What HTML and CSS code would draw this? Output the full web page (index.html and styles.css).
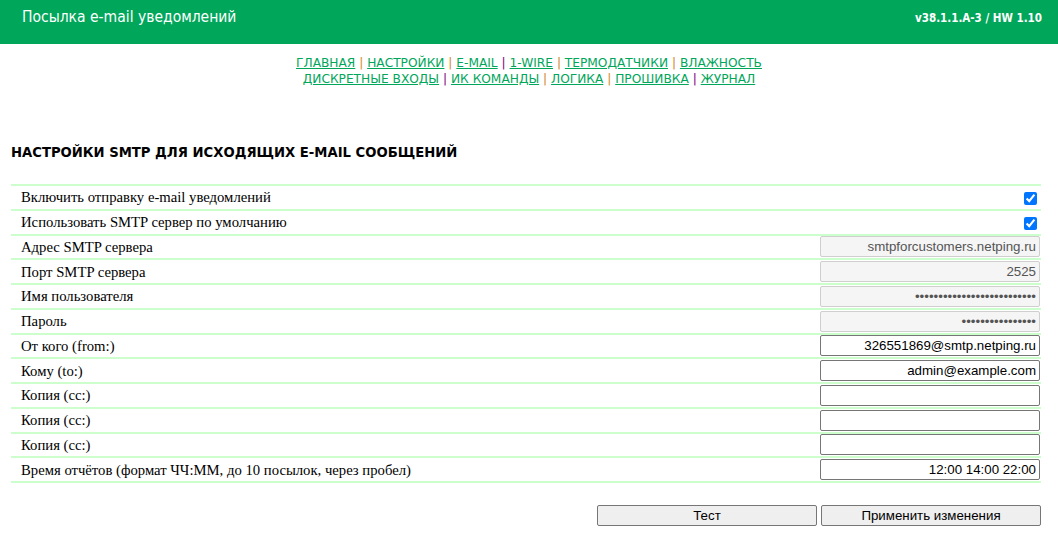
FILE: index.html
```html
<!DOCTYPE html>
<html lang="ru">
<head>
    <meta charset="UTF-8">
    <title>Посылка e-mail уведомлений</title>
    <link rel="stylesheet" href="styles.css">
</head>
<body>
    <div id="header">
        <div id="title">Посылка e-mail уведомлений</div>
        <div id="version">v38.1.1.A-3 / HW 1.10</div>
    </div>

    <div id="nav">
        <div>
            <a href="#">ГЛАВНАЯ</a> <span class="sep">|</span>
            <a href="#">НАСТРОЙКИ</a> <span class="sep">|</span>
            <a href="#">E-MAIL</a> <span class="sep alt">|</span>
            <a href="#">1-WIRE</a> <span class="sep">|</span>
            <a href="#">ТЕРМОДАТЧИКИ</a> <span class="sep">|</span>
            <a href="#">ВЛАЖНОСТЬ</a>
        </div>
        <div>
            <a href="#">ДИСКРЕТНЫЕ ВХОДЫ</a> <span class="sep alt">|</span>
            <a href="#">ИК КОМАНДЫ</a> <span class="sep">|</span>
            <a href="#">ЛОГИКА</a> <span class="sep">|</span>
            <a href="#">ПРОШИВКА</a> <span class="sep alt">|</span>
            <a href="#">ЖУРНАЛ</a>
        </div>
    </div>

    <h2>НАСТРОЙКИ SMTP ДЛЯ ИСХОДЯЩИХ E-MAIL СООБЩЕНИЙ</h2>

    <table id="settings">
        <tr>
            <td>Включить отправку e-mail уведомлений</td>
            <td class="val"><input type="checkbox" checked></td>
        </tr>
        <tr>
            <td>Использовать SMTP сервер по умолчанию</td>
            <td class="val"><input type="checkbox" checked></td>
        </tr>
        <tr>
            <td>Адрес SMTP сервера</td>
            <td class="val"><input type="text" value="smtpforcustomers.netping.ru" disabled></td>
        </tr>
        <tr>
            <td>Порт SMTP сервера</td>
            <td class="val"><input type="text" value="2525" disabled></td>
        </tr>
        <tr>
            <td>Имя пользователя</td>
            <td class="val"><input type="password" value="12345678901234567890123456" disabled></td>
        </tr>
        <tr>
            <td>Пароль</td>
            <td class="val"><input type="password" value="1234567890123456" disabled></td>
        </tr>
        <tr>
            <td>От кого (from:)</td>
            <td class="val"><input type="text" value="326551869@smtp.netping.ru"></td>
        </tr>
        <tr>
            <td>Кому (to:)</td>
            <td class="val"><input type="text" value="admin@example.com"></td>
        </tr>
        <tr>
            <td>Копия (cc:)</td>
            <td class="val"><input type="text" value=""></td>
        </tr>
        <tr>
            <td>Копия (cc:)</td>
            <td class="val"><input type="text" value=""></td>
        </tr>
        <tr>
            <td>Копия (cc:)</td>
            <td class="val"><input type="text" value=""></td>
        </tr>
        <tr>
            <td>Время отчётов (формат ЧЧ:ММ, до 10 посылок, через пробел)</td>
            <td class="val"><input type="text" value="12:00 14:00 22:00"></td>
        </tr>
    </table>

    <div id="actions">
        <button>Тест</button>
        <button>Применить изменения</button>
    </div>
</body>
</html>
```

FILE: styles.css
```css
* {
    margin: 0;
    padding: 0;
    box-sizing: border-box;
}

body {
    font-family: "DejaVu Sans", Verdana, sans-serif;
    background-color: #fff;
    color: #000;
}

#header {
    height: 44px;
    background-color: #00a65a;
    color: #fff;
    display: flex;
    justify-content: space-between;
    align-items: flex-start;
    padding: 7px 16px 0 22px;
    font-family: "DejaVu Sans Condensed", "DejaVu Sans", sans-serif;
}

#title {
    font-size: 15.5px;
    line-height: 20px;
}

#version {
    font-size: 11.5px;
    font-weight: bold;
    line-height: 22px;
}

#nav {
    text-align: center;
    font-size: 12.2px;
    line-height: 16px;
    padding-top: 11px;
}

#nav a {
    color: #00a65a;
}

#nav .sep {
    color: #d4891f;
}

#nav .sep.alt {
    color: #800080;
}

h2 {
    font-size: 13.2px;
    font-weight: bold;
    margin: 57px 0 0 11px;
    line-height: 18px;
}

#settings {
    margin: 22px 0 0 11px;
    width: 1030px;
    border-collapse: collapse;
    border-top: 2px solid #ccffcc;
    font-family: "Liberation Serif", "Times New Roman", serif;
    font-size: 14.7px;
}

#settings td {
    height: 24.75px;
    padding: 1px 0 0 10px;
    border-bottom: 2px solid #ccffcc;
    vertical-align: middle;
}

#settings td.val {
    width: 230px;
    text-align: right;
    padding: 0 1px 0 0;
}

#settings input[type="text"],
#settings input[type="password"] {
    width: 220px;
    height: 21px;
    font-family: "Liberation Sans", Arial, sans-serif;
    font-size: 13.3px;
    text-align: right;
    padding: 0 3px;
    border: 1px solid #767676;
    border-radius: 2px;
    vertical-align: middle;
}

#settings input:disabled {
    background-color: #f5f5f5;
    border-color: #cfcfcf;
    color: #545454;
}

#settings input[type="checkbox"] {
    width: 13px;
    height: 13px;
    margin: 0 3px 0 0;
    vertical-align: middle;
}

#actions {
    display: flex;
    justify-content: flex-end;
    gap: 4px;
    padding: 22px 17px 0 0;
}

#actions button {
    width: 220px;
    height: 21px;
    font-family: "Liberation Sans", Arial, sans-serif;
    font-size: 13.3px;
    background-color: #efefef;
    border: 1px solid #767676;
    border-radius: 2px;
    color: #000;
}
```
